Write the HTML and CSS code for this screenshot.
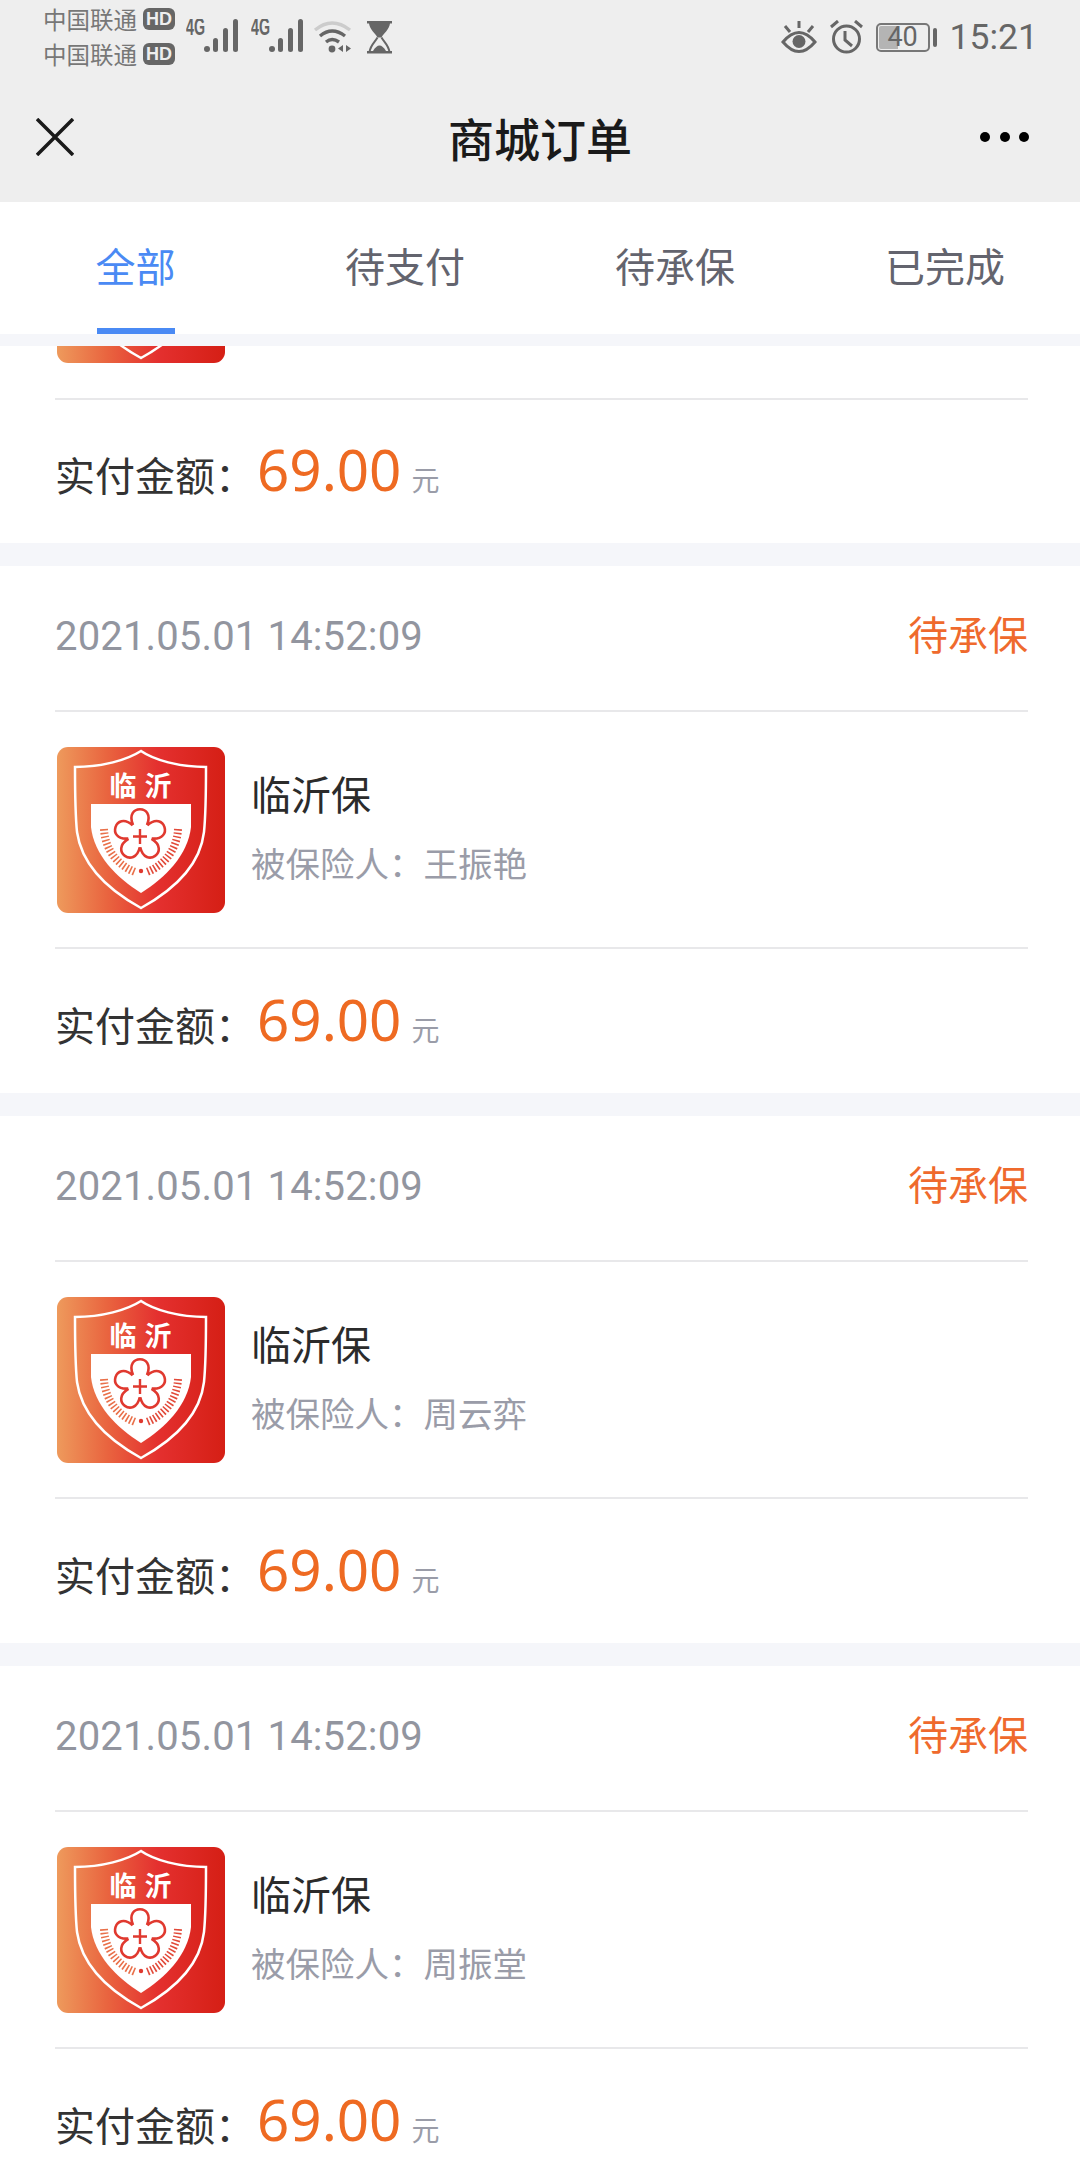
FILE: index.html
```html
<!DOCTYPE html>
<html lang="zh-CN">
<head>
    <meta charset="UTF-8">
    <meta name="viewport" content="width=device-width, initial-scale=1.0">
    <title>商城订单</title>
    <link rel="stylesheet" href="styles.css">
</head>
<body>
    <svg class="defs" width="0" height="0">
        <defs>
            <linearGradient id="logo-bg" x1="0" y1="0" x2="1" y2="0">
                <stop offset="0" stop-color="#ee9a5c"/>
                <stop offset="0.3" stop-color="#e9643f"/>
                <stop offset="0.6" stop-color="#e4302f"/>
                <stop offset="1" stop-color="#d51f15"/>
            </linearGradient>
            <path id="petal" d="M76 78 C67 57 99 57 90 78" fill="none" stroke="#e0392f" stroke-width="2.600"/>
            <symbol id="logo" viewBox="0 0 168 166">
                <rect width="168" height="166" rx="11" fill="url(#logo-bg)"/>
                <path d="M84 4 C70 13 45 20 18 20 C18 45 18 65 20 85 C25 120 55 145 84 161 C113 145 143 120 147 85 C149 65 149 45 149 20 C122 20 97 13 84 4 Z" fill="none" stroke="#fff" stroke-width="2.500"/>
                <path d="M34 57 H134 V80 C131 108 108 131 84 146 C60 131 37 108 34 80 Z" fill="#fff"/>
                <text class="logo-text" x="66" y="49" text-anchor="middle">临</text>
                <text class="logo-text" x="101" y="49" text-anchor="middle">沂</text>
                <use href="#petal"/>
                <use href="#petal" transform="rotate(72 83 88)"/>
                <use href="#petal" transform="rotate(144 83 88)"/>
                <use href="#petal" transform="rotate(216 83 88)"/>
                <use href="#petal" transform="rotate(288 83 88)"/>
                <path d="M83 82 V97 M76 89.500 H90" stroke="#e0392f" stroke-width="2.400"/>
                <path d="M47 82 C48 102 60 118 78 125" fill="none" stroke="#e9704a" stroke-width="8" stroke-dasharray="1.600 2"/>
                <path d="M121 82 C120 102 108 118 90 125" fill="none" stroke="#e24a3a" stroke-width="8" stroke-dasharray="1.600 2"/>
                <circle cx="84" cy="124" r="2.200" fill="#e0392f"/>
            </symbol>
            <symbol id="signal" viewBox="0 0 53 34">
                <text class="net-text" x="0" y="16" textLength="19" lengthAdjust="spacingAndGlyphs">4G</text>
                <circle cx="21" cy="30" r="3" fill="#666"/>
                <rect x="27" y="19" width="5" height="14" rx="2.500" fill="#666"/>
                <rect x="37" y="9" width="5" height="24" rx="2.500" fill="#666"/>
                <rect x="47" y="0" width="5" height="33" rx="2.500" fill="#666"/>
            </symbol>
        </defs>
    </svg>

    <header class="top">
        <div class="status">
            <div class="carriers">
                <div class="carrier">中国联通 <span class="hd">HD</span></div>
                <div class="carrier">中国联通 <span class="hd">HD</span></div>
            </div>
            <svg class="ic-signal" width="53" height="34"><use href="#signal"/></svg>
            <svg class="ic-signal" width="53" height="34"><use href="#signal"/></svg>
            <svg class="ic-wifi" width="40" height="33" viewBox="0 0 40 33" fill="none">
                <path d="M2 10 Q19 -4 37 10" stroke="#ccc" stroke-width="3.400"/>
                <path d="M7 16 Q19 6 32 16" stroke="#666" stroke-width="3.400"/>
                <path d="M13 22 Q19 17 26 22" stroke="#666" stroke-width="3.400"/>
                <circle cx="19" cy="29" r="3.400" fill="#666"/>
                <path d="M30 25 V32 L25 28.500 Z M33 25 V32 L38 28.500 Z" fill="#666"/>
            </svg>
            <svg class="ic-glass" width="26" height="33" viewBox="0 0 26 33">
                <path d="M0 0 H25 V2.500 H23 C22 9 17 12 14.500 16.500 H10.500 C8 12 3 9 2 2.500 H0 Z" fill="#666"/>
                <path d="M10.500 16.500 C8 21 3.500 24 2.500 31 H22.500 C21.500 24 17 21 14.500 16.500" fill="none" stroke="#666" stroke-width="2"/>
                <path d="M6 30 Q12.500 19 19 30 Z" fill="#666"/>
                <rect y="30" width="25" height="2.500" fill="#666"/>
            </svg>
            <div class="status-right">
                <svg width="36" height="33" viewBox="0 0 36 33" fill="none" stroke="#666">
                    <path d="M2 21 Q18 2 34 21 Q18 40 2 21 Z" stroke-width="3"/>
                    <circle cx="18" cy="20.500" r="6.500" fill="#666" stroke="none"/>
                    <path d="M18 0 V7 M4 5 L9 11 M32 5 L27 11" stroke-width="3"/>
                </svg>
                <svg width="33" height="34" viewBox="0 0 33 34" fill="none" stroke="#666">
                    <circle cx="16.500" cy="19" r="13" stroke-width="3"/>
                    <path d="M15 11 V20 L22 26" stroke-width="3"/>
                    <path d="M1 7 L8 1 M32 7 L25 1" stroke-width="3"/>
                </svg>
                <div class="battery-wrap">
                    <div class="battery">40</div>
                    <div class="battery-nub"></div>
                </div>
                <div class="time">15:21</div>
            </div>
        </div>
        <div class="navbar">
            <svg class="nav-close" width="38" height="38" viewBox="0 0 38 38" fill="none" stroke="#1a1a1a" stroke-width="3.500">
                <path d="M1 1 L37 37 M37 1 L1 37"/>
            </svg>
            <h1 class="nav-title">商城订单</h1>
            <div class="nav-more"><span></span><span></span><span></span></div>
        </div>
    </header>

    <nav class="tabs">
        <a class="tab tab-on">全部</a>
        <a class="tab">待支付</a>
        <a class="tab">待承保</a>
        <a class="tab">已完成</a>
    </nav>

    <main class="list">
        <section class="card card-cut">
            <div class="card-body card-body-cut">
                <svg class="logo" width="168" height="166"><use href="#logo"/></svg>
            </div>
            <div class="card-foot">
                <span class="pay-label">实付金额：</span><span class="pay-num">69.00</span><span class="pay-unit">元</span>
            </div>
        </section>

        <section class="card">
            <div class="card-head">
                <span class="order-time">2021.05.01 14:52:09</span>
                <span class="order-state">待承保</span>
            </div>
            <div class="card-body">
                <svg class="logo" width="168" height="166"><use href="#logo"/></svg>
                <div class="info">
                    <div class="info-name">临沂保</div>
                    <div class="info-sub">被保险人：王振艳</div>
                </div>
            </div>
            <div class="card-foot">
                <span class="pay-label">实付金额：</span><span class="pay-num">69.00</span><span class="pay-unit">元</span>
            </div>
        </section>

        <section class="card">
            <div class="card-head">
                <span class="order-time">2021.05.01 14:52:09</span>
                <span class="order-state">待承保</span>
            </div>
            <div class="card-body">
                <svg class="logo" width="168" height="166"><use href="#logo"/></svg>
                <div class="info">
                    <div class="info-name">临沂保</div>
                    <div class="info-sub">被保险人：周云弈</div>
                </div>
            </div>
            <div class="card-foot">
                <span class="pay-label">实付金额：</span><span class="pay-num">69.00</span><span class="pay-unit">元</span>
            </div>
        </section>

        <section class="card">
            <div class="card-head">
                <span class="order-time">2021.05.01 14:52:09</span>
                <span class="order-state">待承保</span>
            </div>
            <div class="card-body">
                <svg class="logo" width="168" height="166"><use href="#logo"/></svg>
                <div class="info">
                    <div class="info-name">临沂保</div>
                    <div class="info-sub">被保险人：周振堂</div>
                </div>
            </div>
            <div class="card-foot">
                <span class="pay-label">实付金额：</span><span class="pay-num">69.00</span><span class="pay-unit">元</span>
            </div>
        </section>
    </main>
</body>
</html>
```

FILE: styles.css
```css
html, body {
    margin: 0;
    padding: 0;
    height: 2160px;
    overflow: hidden;
}
body {
    font-family: "Noto Sans CJK SC", "Noto Sans", sans-serif;
    background-color: #f5f6fa;
    color: #333;
}
.defs {
    display: block;
}
.logo-text {
    font-family: "Noto Sans CJK SC", sans-serif;
    font-size: 27px;
    font-weight: 700;
    fill: #fff;
}
.net-text {
    font-family: "Liberation Sans", sans-serif;
    font-size: 23px;
    font-weight: 700;
    fill: #666;
}

/* status bar + title */
.top {
    background-color: #eee;
    height: 202px;
}
.status {
    display: flex;
    align-items: flex-start;
    height: 76px;
    padding: 8px 42px 0 43px;
    box-sizing: border-box;
}
.carriers {
    display: flex;
    flex-direction: column;
    gap: 13px;
    width: 143px;
}
.carrier {
    display: flex;
    align-items: center;
    gap: 6px;
    height: 22px;
    font-size: 23.5px;
    line-height: 22px;
    color: #777;
    white-space: nowrap;
}
.hd {
    display: block;
    width: 32px;
    height: 22px;
    border-radius: 6px;
    background-color: #666;
    color: #eee;
    font-family: "Liberation Sans", sans-serif;
    font-size: 18px;
    font-weight: 700;
    line-height: 22px;
    text-align: center;
}
.ic-signal {
    margin-top: 11px;
    margin-right: 12px;
    flex: none;
}
.ic-wifi {
    margin-top: 12px;
    margin-left: -3px;
    flex: none;
}
.ic-glass {
    margin-top: 13px;
    margin-left: 14px;
    flex: none;
}
.status-right {
    display: flex;
    align-items: center;
    gap: 13px;
    margin-left: auto;
    margin-top: 12px;
}
.battery-wrap {
    display: flex;
    align-items: center;
    gap: 3px;
}
.battery {
    width: 54px;
    height: 29px;
    box-sizing: border-box;
    border: 2px solid #777;
    border-radius: 5px;
    background: linear-gradient(90deg, #b4b4b4 40%, transparent 40%);
    background-clip: content-box;
    padding: 1px;
    font-family: Roboto, sans-serif;
    font-size: 27px;
    line-height: 23px;
    color: #666;
    text-align: center;
}
.battery-nub {
    width: 4px;
    height: 19px;
    border-radius: 2px;
    background-color: #666;
}
.time {
    font-family: Roboto, sans-serif;
    font-size: 35.5px;
    line-height: 34px;
    color: #666;
}
.navbar {
    display: grid;
    grid-template-columns: 1fr auto 1fr;
    align-items: center;
    height: 126px;
    padding: 0 51px 4px 36px;
    box-sizing: border-box;
}
.nav-close {
    display: block;
}
.nav-title {
    margin: 0 0 0 15px;
    font-size: 46px;
    font-weight: 500;
    color: #1a1a1a;
}
.nav-more {
    display: flex;
    justify-content: flex-end;
    gap: 9.5px;
}
.nav-more span {
    width: 10px;
    height: 10px;
    border-radius: 50%;
    background-color: #000;
}

/* tabs */
.tabs {
    display: grid;
    grid-template-columns: repeat(4, 1fr);
    height: 132px;
    background-color: #fff;
}
.tab {
    display: flex;
    align-items: center;
    justify-content: center;
    width: 100%;
    box-sizing: border-box;
    font-size: 40px;
    color: #63646e;
    padding-bottom: 6px;
    white-space: nowrap;
}
.tab-on {
    color: #4a8af4;
    width: 78px;
    justify-self: center;
    margin-left: 1px;
    border-bottom: 6px solid #4a8af4;
    padding-bottom: 0;
}

/* order list */
.list {
    display: flex;
    flex-direction: column;
    gap: 23px;
    margin-top: 12px;
}
.card {
    background-color: #fff;
    padding: 0 52px 0 55px;
}
.card-head {
    display: flex;
    align-items: center;
    justify-content: space-between;
    height: 141px;
    padding-bottom: 3px;
    border-bottom: 2px solid #e8e8ea;
}
.order-time {
    font-family: Roboto, sans-serif;
    font-size: 40px;
    letter-spacing: 0.15px;
    color: #92959f;
}
.order-state {
    font-size: 40px;
    color: #ef6a2d;
    margin-bottom: 7px;
}
.card-body {
    display: flex;
    align-items: center;
    gap: 26px;
    height: 237px;
    padding-left: 2px;
    box-sizing: border-box;
    border-bottom: 2px solid #e8e8ea;
}
.card-body-cut {
    height: 54px;
    align-items: flex-end;
    padding-bottom: 35px;
    overflow: hidden;
}
.logo {
    flex: none;
}
.info {
    display: flex;
    flex-direction: column;
    gap: 20px;
    padding-bottom: 6px;
}
.info-name {
    font-size: 40px;
    line-height: 50px;
    color: #2b2b2b;
}
.info-sub {
    font-size: 34.5px;
    line-height: 48px;
    color: #9a9ca8;
}
.card-foot {
    display: flex;
    align-items: baseline;
    height: 144px;
    padding-top: 41px;
    box-sizing: border-box;
}
.card-cut .card-foot {
    height: 143px;
    padding-top: 40px;
}
.pay-label {
    font-size: 40px;
    color: #333;
    width: 202px;
    white-space: nowrap;
}
.pay-num {
    font-family: "Noto Sans", sans-serif;
    font-size: 56.5px;
    line-height: 60px;
    color: #ee6a22;
}
.pay-unit {
    margin-left: 10px;
    font-size: 28px;
    color: #9a9ca8;
}
```
